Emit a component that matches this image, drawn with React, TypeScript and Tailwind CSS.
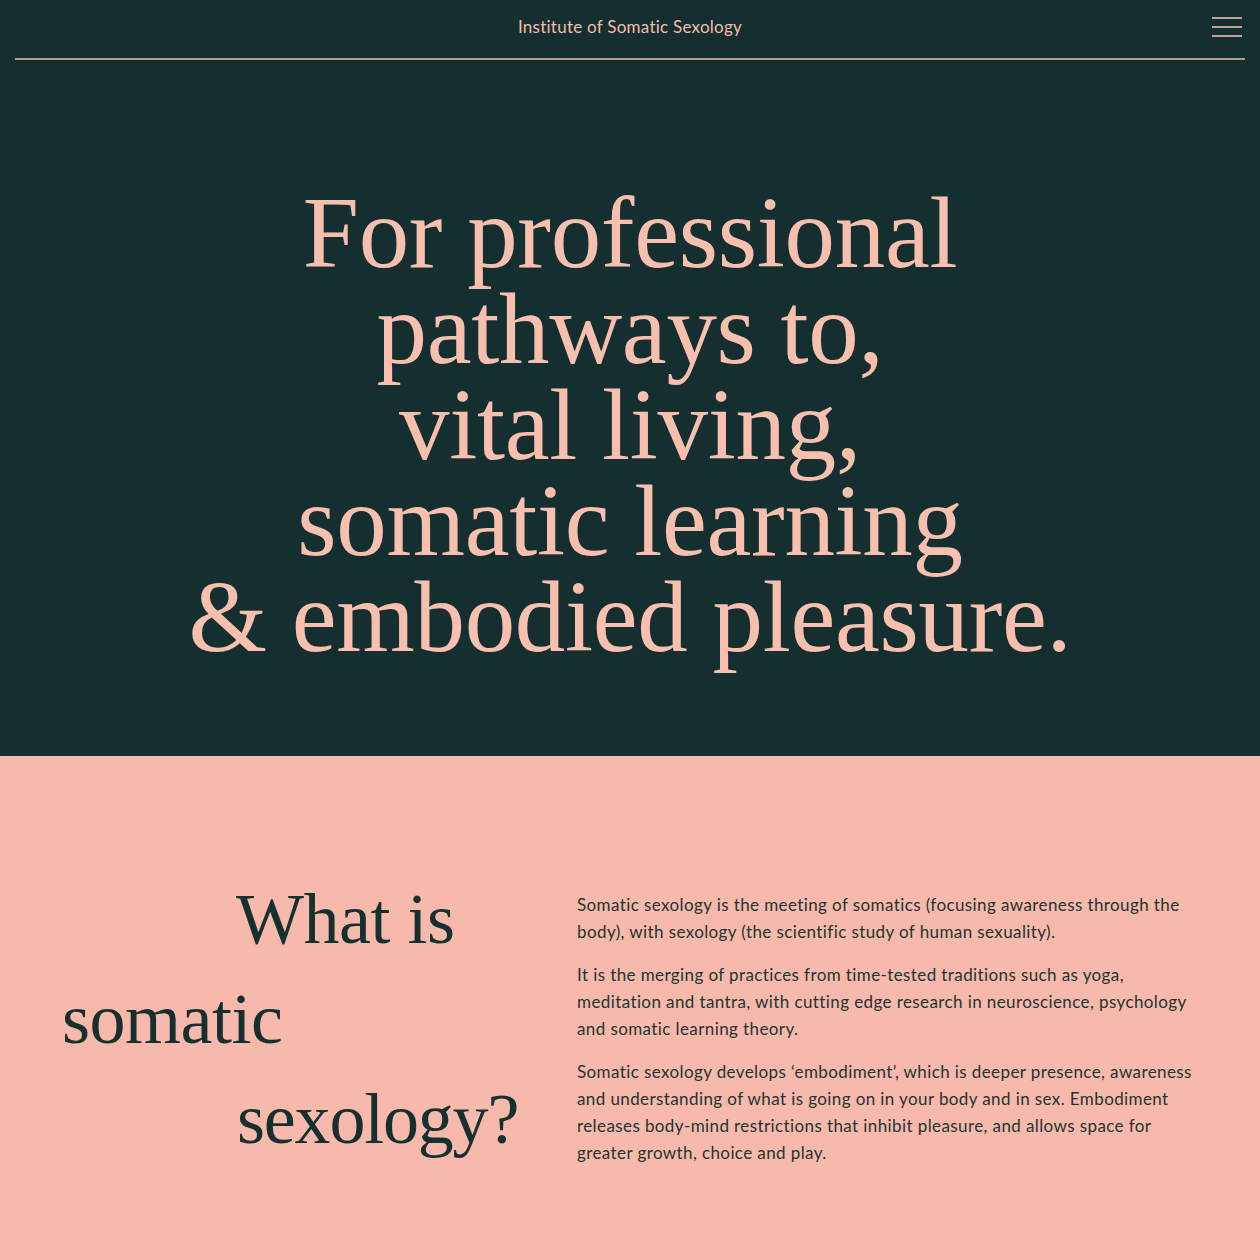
import React from "react";

const serif = { fontFamily: '"Liberation Serif", "DejaVu Serif", serif' };

const App: React.FC = () => {
  return (
    <div className="min-h-[1260px] bg-[#f7b9ab]" style={{ fontFamily: 'Lato, "Open Sans", sans-serif' }}>
      {/* Hero */}
      <section className="bg-[#152f31] h-[756px] flex flex-col">
        <header className="mx-[15px] h-[60px] border-b-2 border-[#b59a8d] grid grid-cols-[1fr_auto_1fr] items-center">
          <div />
          <div className="text-[17px] text-[#f4bba9] tracking-[0.25px] -mt-[5px]">
            Institute of Somatic Sexology
          </div>
          <div className="flex justify-end -mt-[5px]">
            <button className="flex flex-col gap-[7px] mr-[3px]" aria-label="Menu">
              <span className="block w-[30px] h-[2px] bg-[#c0a396]" />
              <span className="block w-[30px] h-[2px] bg-[#c0a396]" />
              <span className="block w-[30px] h-[2px] bg-[#c0a396]" />
            </button>
          </div>
        </header>

        <h1
          className="mt-[125px] text-center text-[101px] leading-[96px] text-[#f7bfae] tracking-[-0.3px]"
          style={serif}
        >
          For professional
          <br />
          pathways to,
          <br />
          vital living,
          <br />
          somatic learning
          <br />& embodied pleasure.
        </h1>
      </section>

      {/* What is somatic sexology */}
      <section className="flex pt-[113px] pb-[80px]">
        <h2 className="w-[515px] shrink-0 pl-[62px] text-[72px] leading-[100px] text-[#15302f] tracking-[-0.5px]" style={serif}>
          <span className="block pl-[174px]">What is</span>
          <span className="block">somatic</span>
          <span className="block pl-[175px] tracking-[-1.2px]">sexology?</span>
        </h2>

        <div className="ml-[62px] mt-[22px] w-[620px] text-[17px] leading-[27px] tracking-[0.4px] text-[#1d3534] space-y-[16px]">
          <p>
            Somatic sexology is the meeting of somatics (focusing awareness through the body), with sexology (the
            scientific study of human sexuality).
          </p>
          <p>
            It is the merging of practices from time-tested traditions such as yoga, meditation and tantra, with
            cutting edge research in neuroscience, psychology and somatic learning theory.
          </p>
          <p>
            Somatic sexology develops ‘embodiment’, which is deeper presence, awareness and understanding of what is
            going on in your body and in sex. Embodiment releases body-mind restrictions that inhibit pleasure, and
            allows space for greater growth, choice and play.
          </p>
        </div>
      </section>
    </div>
  );
};

export default App;
